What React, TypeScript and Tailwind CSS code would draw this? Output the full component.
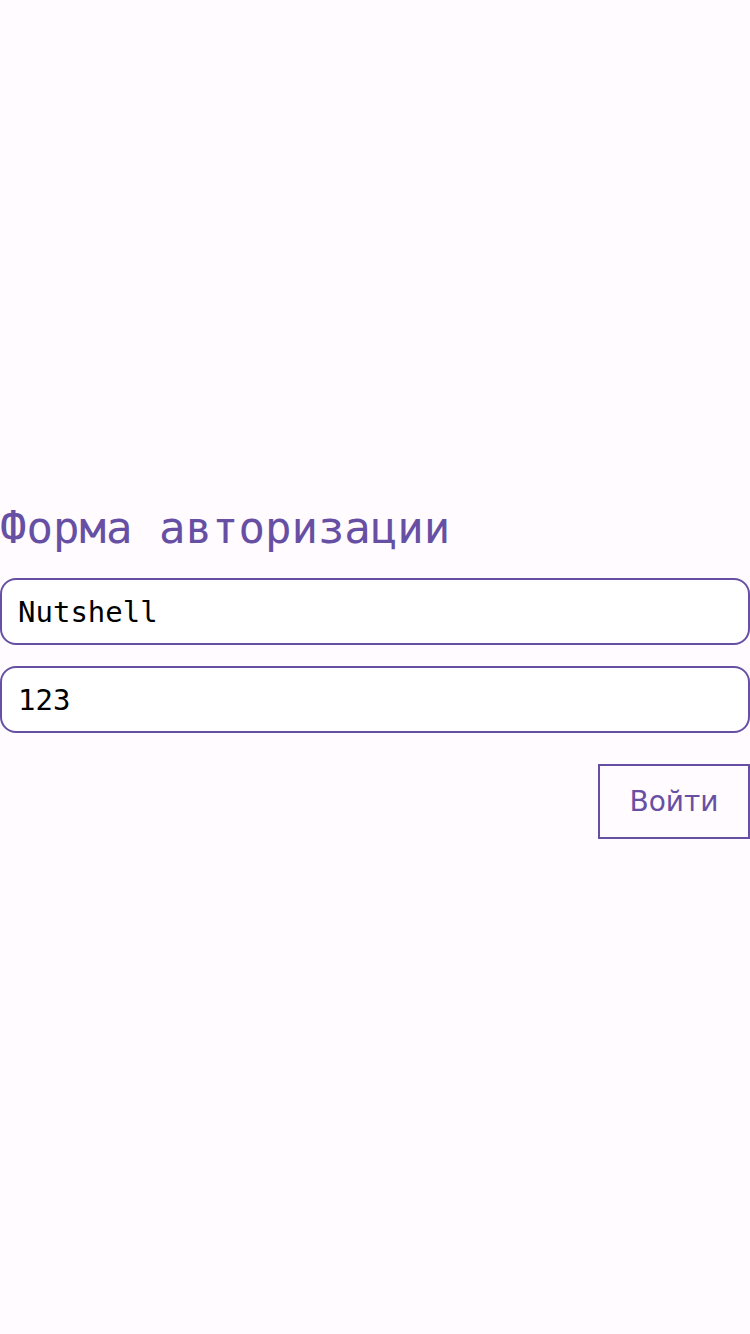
export default function App() {
  return (
    <main className="min-h-screen bg-[#fffbfe] flex flex-col justify-center pt-[7px]">
      <form className="flex flex-col" onSubmit={(e) => e.preventDefault()}>
        <h1 className="text-[44px] leading-[51px] text-[#6750a4] font-['DejaVu_Sans_Mono',monospace] font-normal">
          Форма авторизации
        </h1>
        <input
          className="mt-[25px] h-[67px] w-full bg-white border-2 border-[#6750a4] rounded-[16px] px-4 text-[29px] text-black font-['DejaVu_Sans_Mono',monospace] outline-none"
          defaultValue="Nutshell"
        />
        <input
          className="mt-[21px] h-[67px] w-full bg-white border-2 border-[#6750a4] rounded-[16px] px-4 text-[29px] text-black font-['DejaVu_Sans_Mono',monospace] outline-none"
          defaultValue="123"
        />
        <div className="flex justify-end mt-[31px]">
          <button
            type="submit"
            className="w-[152px] h-[75px] border-2 border-[#6750a4] text-[#6750a4] text-[28px] font-['DejaVu_Sans',sans-serif] bg-transparent"
          >
            Войти
          </button>
        </div>
      </form>
    </main>
  );
}
